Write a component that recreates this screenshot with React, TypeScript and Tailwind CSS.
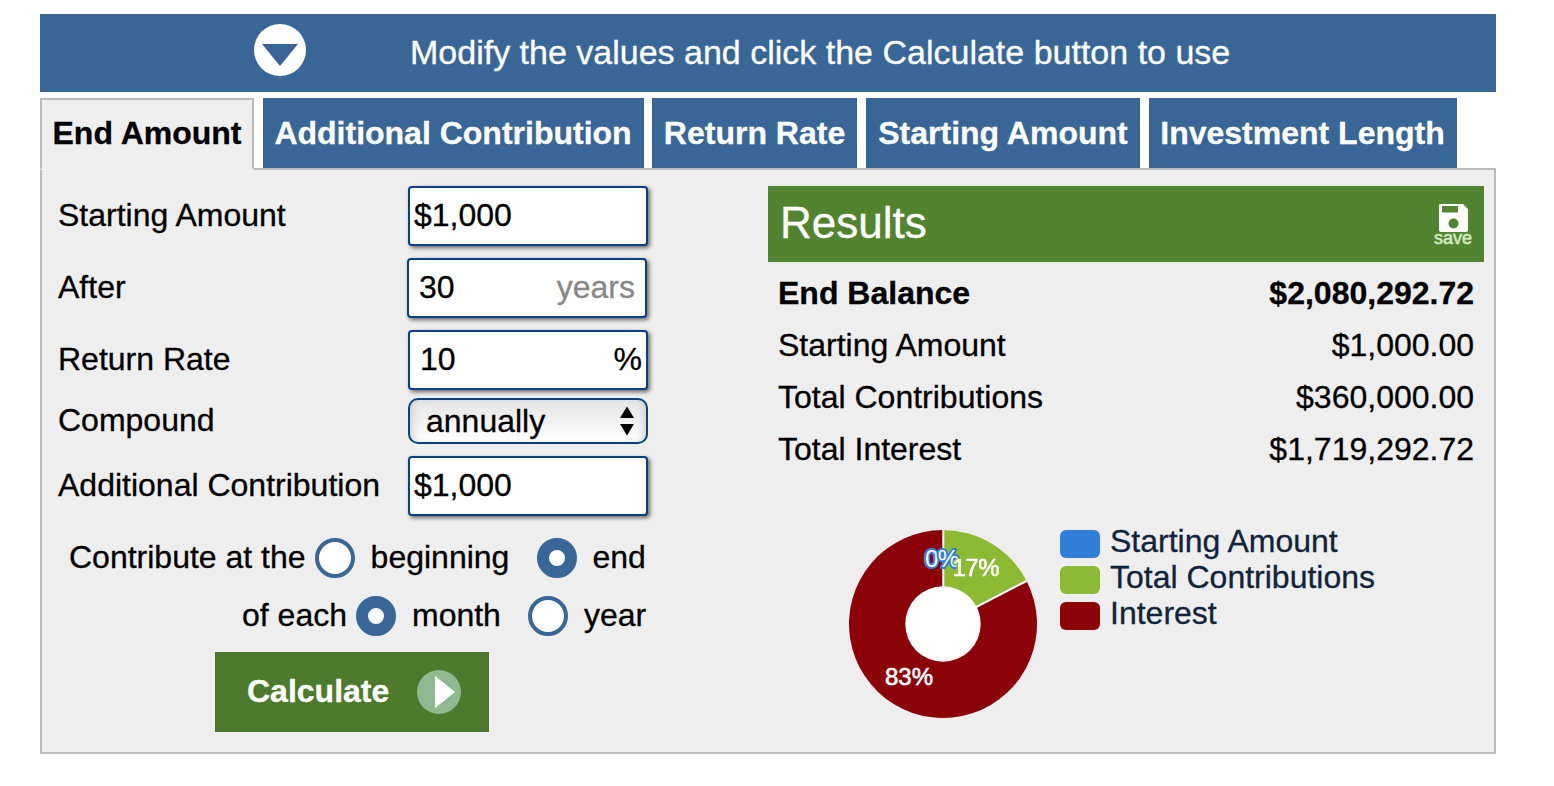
import type { ReactNode } from "react"
import clsx from "clsx"

const tabs = [
    { name: "Additional Contribution", className: "ml-[9px] w-[381px] pr-px" },
    { name: "Return Rate", className: "ml-2 w-[205px]" },
    { name: "Starting Amount", className: "ml-[9px] w-[274px]" },
    { name: "Investment Length", className: "ml-[9px] w-[308px] pr-px" },
]

const results = [
    { label: "End Balance", value: "$2,080,292.72", bold: true },
    { label: "Starting Amount", value: "$1,000.00" },
    { label: "Total Contributions", value: "$360,000.00" },
    { label: "Total Interest", value: "$1,719,292.72" },
]

const legend = [
    { label: "Starting Amount", color: "bg-[#327fd9]" },
    { label: "Total Contributions", color: "bg-[#8dba33]" },
    { label: "Interest", color: "bg-[#8c0209]" },
]

const Field = ({ label, children, className }: { label: string; children: ReactNode; className?: string }) => (
    <div className={clsx("flex items-center justify-between", className)}>
        <span className="relative -top-px">{label}</span>
        {children}
    </div>
)

const Box = ({ children, className }: { children: ReactNode; className?: string }) => (
    <div className={clsx("flex h-[60px] w-60 items-center justify-between rounded border-2 border-[#064282] bg-white pb-0.5 shadow-[2px_2px_4px_#666]", className)}>
        {children}
    </div>
)

const Radio = ({ checked, className }: { checked?: boolean; className?: string }) => (
    <span className={clsx("size-10 shrink-0 rounded-full border-[#386797] bg-white", checked ? "border-[12px]" : "border-4", className)} />
)

const PieChart = () => (
    <svg width="190" height="190" viewBox="-95 -95 190 190" className="ml-20 shrink-0 text-2xl [-webkit-text-stroke:0]">
        <path d="M0 0L83.6 -43A94 94 0 1 1 0 -94Z" fill="#8c0209" />
        <path d="M0 0V-94A94 94 0 0 1 83.6 -43Z" fill="#8dba33" />
        <path d="M0.3 -94V0L83.6 -43" fill="none" stroke="#fff" strokeWidth="2" />
        <circle r="37.7" fill="#fff" />
        <g fill="#fff">
            <text x="-18" y="-57" textLength="34" stroke="#327fd9" strokeWidth="4" strokeLinejoin="round" className="[paint-order:stroke]">0%</text>
            <text x="9.5" y="-48" textLength="47" stroke="#fff" strokeWidth="0.6" className="drop-shadow-[-1.5px_0_0_#8dba33]">17%</text>
            <text x="-58" y="61" textLength="48" stroke="#fff" strokeWidth="0.6">83%</text>
        </g>
    </svg>
)

export default function App() {
    return (
        <main className="ml-10 w-[1456px] pt-3.5 font-['Liberation_Sans',Arial,sans-serif] text-[32px] leading-9 whitespace-nowrap text-black [-webkit-text-stroke:0.3px]">
            <div className="flex h-[78px] items-center bg-[#386797] pl-[214px] text-[34px] text-white">
                <svg width="52" height="52" viewBox="0 0 52 52" className="relative -top-[3px]">
                    <circle cx="26" cy="26" r="26" fill="#fff" />
                    <path d="M8 20H44L26 42Z" fill="#386797" />
                </svg>
                <span className="relative -top-px ml-[104px]">Modify the values and click the Calculate button to use</span>
            </div>

            <div className="mt-1.5 flex h-[70px] font-bold text-white">
                <div className="z-10 flex h-[72px] w-[214px] items-center justify-center border-2 border-[#bbb] border-b-[#eee] bg-[#eee] pb-0.5 text-black">End Amount</div>
                {tabs.map((tab) => (
                    <div key={tab.name} className={clsx("flex items-center justify-center bg-[#386797]", tab.className)}>{tab.name}</div>
                ))}
            </div>

            <div className="flex h-[586px] justify-between border-2 border-[#bbb] bg-[#eee] pt-4 pr-2.5 pl-4">
                <div className="w-[590px]">
                    <Field label="Starting Amount">
                        <Box className="pl-1">$1,000</Box>
                    </Field>
                    <Field label="After" className="mt-3 pr-px">
                        <Box className="pr-2.5 pl-2.5">
                            30<span className="text-[#888]">years</span>
                        </Box>
                    </Field>
                    <Field label="Return Rate" className="mt-3">
                        <Box className="pr-1 pl-2.5">
                            10<span>%</span>
                        </Box>
                    </Field>
                    <Field label="Compound" className="mt-2">
                        <div className="flex h-[46px] w-60 items-center justify-between rounded-[10px] border-2 border-[#064282] bg-linear-to-b from-[#e5e5e5] to-white pr-3 pl-4 shadow-[inset_8px_0_8px_-6px_#ccc,inset_-8px_0_8px_-6px_#ccc]">
                            annually
                            <svg width="14" height="30" viewBox="0 0 14 30">
                                <path d="M0 12L7 0.5L14 12ZM0 18H14L7 29.5Z" />
                            </svg>
                        </div>
                    </Field>
                    <Field label="Additional Contribution" className="mt-3">
                        <Box className="pl-1">$1,000</Box>
                    </Field>

                    <div className="mt-[22px] flex h-10 items-center pl-[11px]">
                        <span className="relative -top-px">Contribute at the</span>
                        <Radio className="ml-[9px]" />
                        <span className="relative -top-px ml-4">beginning</span>
                        <Radio checked className="ml-[28px]" />
                        <span className="relative -top-px ml-[15px]">end</span>
                    </div>
                    <div className="mt-[18px] flex h-10 items-center pl-[184px]">
                        <span className="relative -top-px">of each</span>
                        <Radio checked className="ml-[9px]" />
                        <span className="relative -top-px ml-4">month</span>
                        <Radio className="ml-[27px]" />
                        <span className="relative -top-px ml-4">year</span>
                    </div>

                    <button className="mt-4 ml-[157px] flex h-20 w-[274px] items-center justify-between bg-[#4d7a2c] pr-7 pl-8 font-bold text-white">
                        <span className="relative -top-px">Calculate</span>
                        <svg width="44" height="44" viewBox="0 0 44 44">
                            <circle cx="22" cy="22" r="22" fill="#90b992" />
                            <path d="M18 6L38 22L18 38Z" fill="#fff" />
                        </svg>
                    </button>
                </div>

                <div className="w-[716px]">
                    <div className="mb-[5px] flex h-[76px] items-center justify-between bg-[#528430] pr-3 pl-3 text-white">
                        <span className="relative -top-px text-[44px]">Results</span>
                        <div className="flex w-[38px] flex-col items-center text-lg leading-3 text-[#d3e8bf] [-webkit-text-stroke:0.6px]">
                            <svg width="30" height="28" viewBox="0 0 30 28">
                                <path fillRule="evenodd" fill="#fff" d="M2 0H25L30 5V26Q30 28 28 28H3Q1 28 1 26V2Q1 0 2 0ZM4 2V8.5H20V2ZM15.5 14.5A5 5 0 1 0 15.5 24.5A5 5 0 1 0 15.5 14.5Z" />
                            </svg>
                            save
                        </div>
                    </div>
                    {results.map((row) => (
                        <div key={row.label} className={clsx("flex h-[52px] items-center justify-between px-2.5", row.bold && "font-bold")}>
                            <span>{row.label}</span>
                            <span>{row.value}</span>
                        </div>
                    ))}
                    <div className="mt-[54px] flex">
                        <PieChart />
                        <div className="-mt-1.5 ml-[22px] text-[#10233a]">
                            {legend.map((item) => (
                                <div key={item.label} className="flex h-9 items-center">
                                    <span className={clsx("relative top-[3px] mr-2.5 h-7 w-10 rounded-md", item.color)} />
                                    {item.label}
                                </div>
                            ))}
                        </div>
                    </div>
                </div>
            </div>
        </main>
    )
}
